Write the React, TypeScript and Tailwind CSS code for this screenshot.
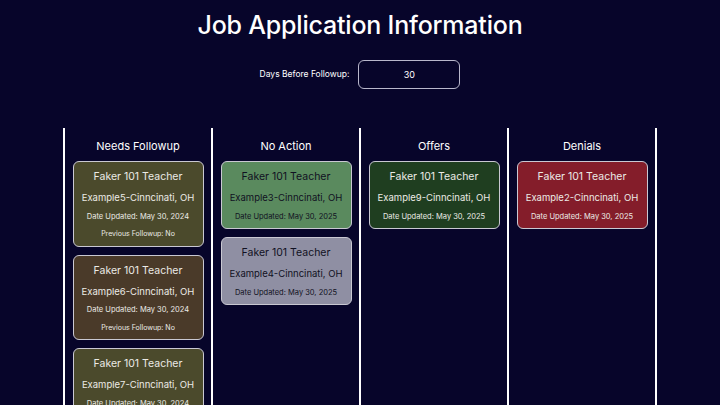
import React, { useState } from 'react';

type Job = {
  title: string;
  place: string;
  date: string;
  followup?: string;
  color: string;
  dark?: boolean;
};

const COLUMNS: { name: string; jobs: Job[] }[] = [
  {
    name: 'Needs Followup',
    jobs: [
      { title: 'Faker 101 Teacher', place: 'Example5-Cinncinati, OH', date: 'May 30, 2024', followup: 'No', color: 'bg-[#4b4a2c]' },
      { title: 'Faker 101 Teacher', place: 'Example6-Cinncinati, OH', date: 'May 30, 2024', followup: 'No', color: 'bg-[#4a3a29]' },
      { title: 'Faker 101 Teacher', place: 'Example7-Cinncinati, OH', date: 'May 30, 2024', followup: 'No', color: 'bg-[#4b4a2c]' },
    ],
  },
  {
    name: 'No Action',
    jobs: [
      { title: 'Faker 101 Teacher', place: 'Example3-Cinncinati, OH', date: 'May 30, 2025', color: 'bg-[#5a8a5e]', dark: true },
      { title: 'Faker 101 Teacher', place: 'Example4-Cinncinati, OH', date: 'May 30, 2025', color: 'bg-[#8f8fa3]', dark: true },
    ],
  },
  {
    name: 'Offers',
    jobs: [
      { title: 'Faker 101 Teacher', place: 'Example9-Cinncinati, OH', date: 'May 30, 2025', color: 'bg-[#1f3e20]' },
    ],
  },
  {
    name: 'Denials',
    jobs: [
      { title: 'Faker 101 Teacher', place: 'Example2-Cinncinati, OH', date: 'May 30, 2025', color: 'bg-[#841d2a]' },
    ],
  },
];

function JobCard({ job }: { job: Job }) {
  return (
    <div
      className={`${job.color} ${job.dark ? 'text-[#111122]' : 'text-[#ecebe6]'} w-[131px] rounded-md border border-[#c9c8d2] flex flex-col items-center pt-[8px] pb-[6.5px]`}
    >
      <p className="text-[10.5px] leading-[14px]">{job.title}</p>
      <p className="text-[9.5px] leading-[13px] mt-[7px]">{job.place}</p>
      <p className="text-[7.5px] leading-[10px] mt-[7.5px]">Date Updated: {job.date}</p>
      {job.followup && (
        <p className="text-[7px] leading-[10px] mt-[7.5px]">Previous Followup: {job.followup}</p>
      )}
    </div>
  );
}

export default function App() {
  const [days, setDays] = useState('30');

  return (
    <div
      className="w-[720px] h-[405px] overflow-hidden bg-[#07052a] text-white flex flex-col items-center"
      style={{ fontFamily: 'Inter, "Liberation Sans", sans-serif' }}
    >
      <h1 className="text-[25px] leading-[34px] mt-[8px] font-medium tracking-[-0.2px]">Job Application Information</h1>

      <div className="flex items-center gap-[9px] mt-[18px]">
        <span className="text-[8.5px]">Days Before Followup:</span>
        <input
          value={days}
          onChange={(e) => setDays(e.target.value)}
          className="w-[102px] h-[29px] rounded-md border border-[#b9b8cc] bg-transparent text-center text-[9px] text-white outline-none"
        />
      </div>

      <div className="flex mt-[39px] flex-1 border-r-2 border-white">
        {COLUMNS.map((col) => (
          <div key={col.name} className="w-[148px] border-l-2 border-white flex flex-col items-center">
            <h2 className="text-[11px] leading-[14px] mt-[11px] mb-[8px]">{col.name}</h2>
            <div className="flex flex-col gap-[8px]">
              {col.jobs.map((job) => (
                <JobCard key={job.place} job={job} />
              ))}
            </div>
          </div>
        ))}
      </div>
    </div>
  );
}
